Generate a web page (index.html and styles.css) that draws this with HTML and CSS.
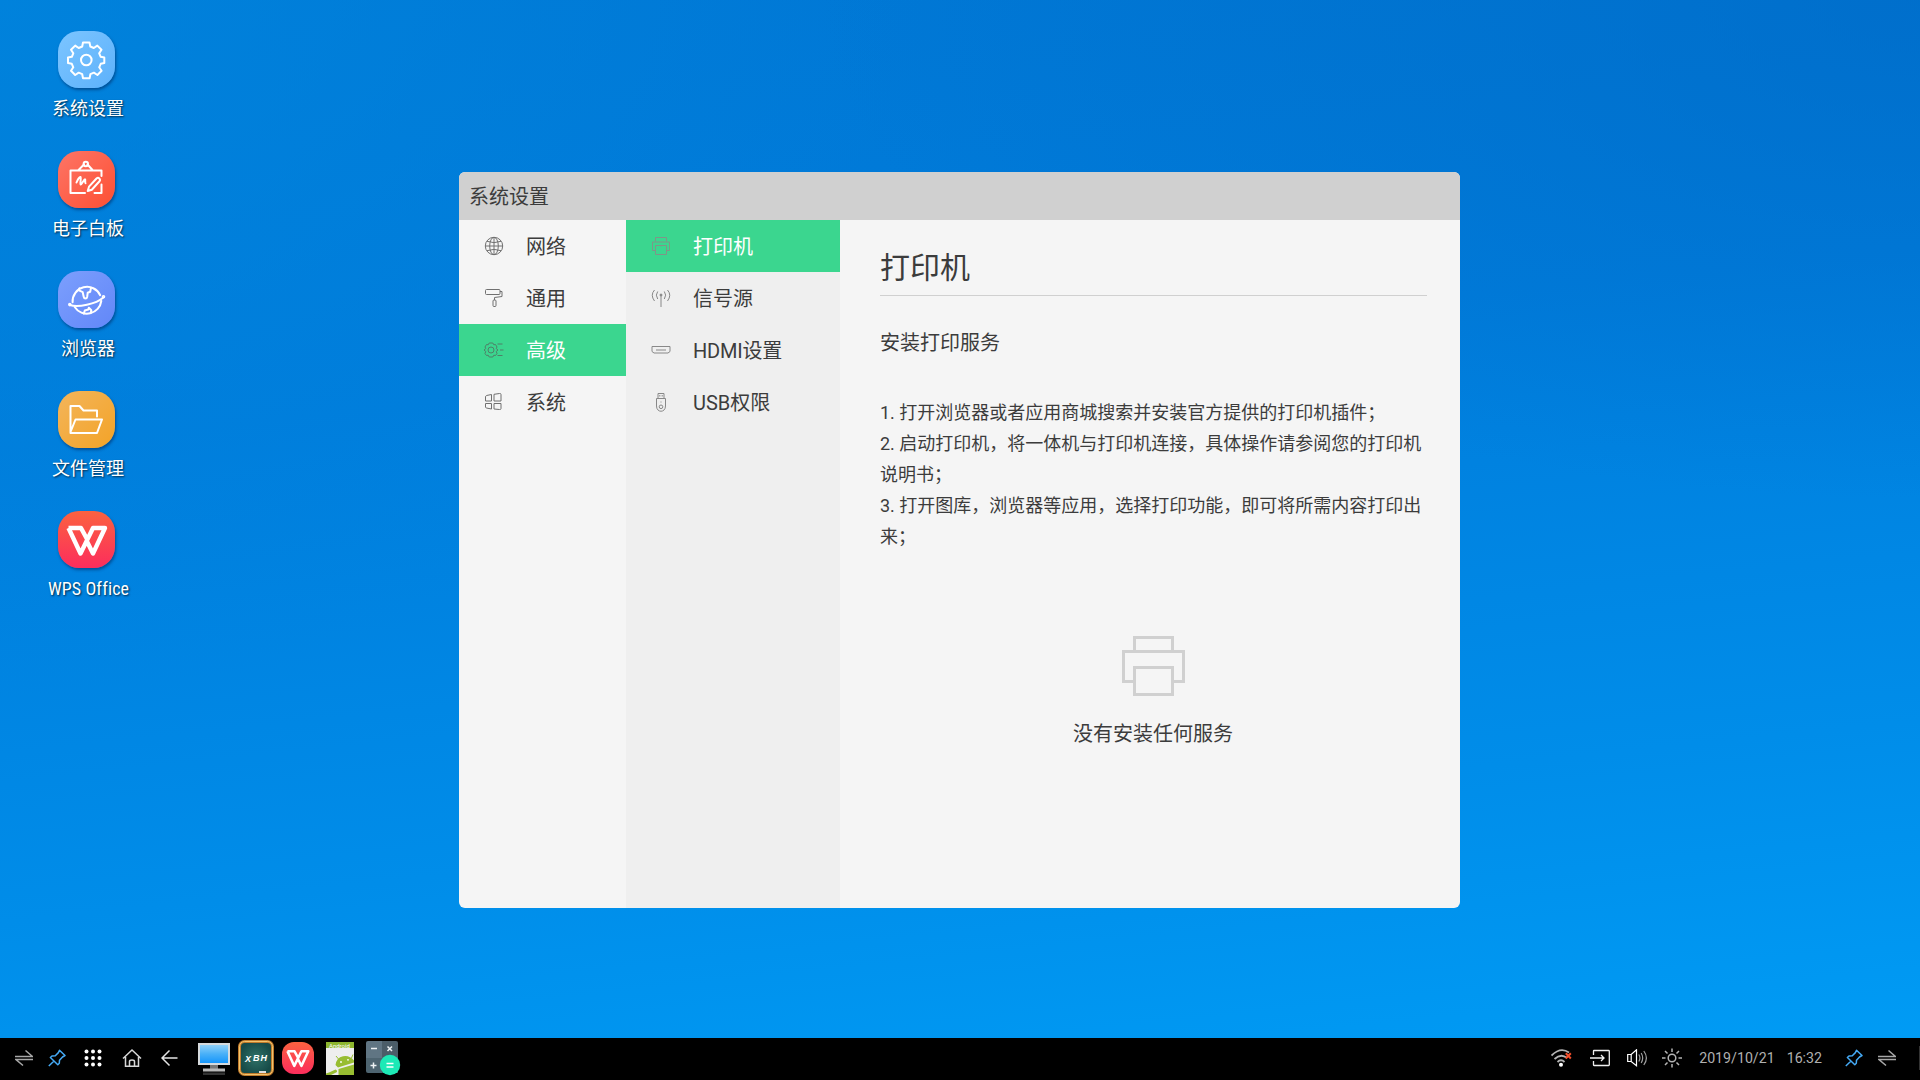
FILE: index.html
```html
<!DOCTYPE html>
<html lang="zh-CN">
<head>
<meta charset="utf-8">
<title>系统设置</title>
<link rel="stylesheet" href="styles.css">
</head>
<body>
<svg width="0" height="0" aria-hidden="true">
  <defs>
    <linearGradient id="wps-red" x1="0" y1="0" x2="0" y2="1"><stop offset="0" stop-color="#fb6240"/><stop offset="1" stop-color="#fc2d5c"/></linearGradient>
    <linearGradient id="screen" x1="0" y1="0" x2="0" y2="1"><stop offset="0" stop-color="#8fd0f8"/><stop offset=".5" stop-color="#48b0f8"/><stop offset="1" stop-color="#1696fb"/></linearGradient>
    <radialGradient id="board"><stop offset="0" stop-color="#2f7268"/><stop offset="1" stop-color="#174b48"/></radialGradient>
    <symbol id="swap" viewBox="0 0 18 18"><path d="M0 7.500H17.500L10.500 1.500M18 10.500H1L8 16.500" fill="none" stroke="#a8a8a8" stroke-width="1.500"/></symbol>
    <symbol id="pin" viewBox="0 0 18 18"><path d="M11.500 1.200 17 6.500 14.500 8 11.500 11.300 11.300 14.300 9.800 15.700 2.400 8.500 4 7 7.300 6.700 10.400 3.600ZM6 12 .8 17" fill="none" stroke="#45aaf5" stroke-width="1.500" stroke-linejoin="round"/></symbol>
    <symbol id="wps-mark" viewBox="0 0 42 32"><path d="M2.500 3H15L21 14M2.500 3 14.500 28.500 27 3H39L27 28.500 21 16.500" fill="none" stroke="#fff" stroke-width="4.400" stroke-linejoin="round"/></symbol>
  </defs>
</svg>
<div class="screen">
  <main class="desktop">
    <nav class="launchers">
      <a class="launcher"><span class="tile tile-settings"><svg width="57" height="57" viewBox="0 0 57 57"><g fill="none" stroke="#fff" stroke-width="2" stroke-linejoin="round"><circle cx="28.300" cy="29" r="5.300"/><path d="M25 11.500h6.500l.8 4 3.500 1.500 3.500-2.400 4.200 4.200-2.300 3.500 1.500 3.500 3.600.7v5.500l-3.600.8-1.500 3.500 2.400 3.500-4.200 4.200-3.500-2.300-3.500 1.500-.8 4H25l-.8-4-3.500-1.500-3.500 2.300-4.200-4.200 2.300-3.500-1.500-3.500-3.800-.8v-5.500l3.800-.7 1.500-3.500-2.300-3.500 4.200-4.200 3.500 2.400 3.500-1.500z"/></g></svg></span><span class="name">系统设置</span></a>
      <a class="launcher"><span class="tile tile-board"><svg width="57" height="57" viewBox="0 0 57 57"><g fill="none" stroke="#fff" stroke-width="2" stroke-linejoin="round" stroke-linecap="round"><path d="M43.500 25V19.500H12.500V42H27M36.500 42H43.500V33.500M20.500 19 26 13.500M34.500 19 29.500 13.500"/><circle cx="27.800" cy="13" r="2.200"/><path d="M18.500 31.500c1-2.500 3-6 4-5.500s-.8 7 .2 7.500 3.300-5.500 4.300-5.300-.5 3.500.5 4"/><path d="M29.700 40 31 35.700 38.500 27.500c2-1.700 4.500.5 3 2.800L33.800 38.700Z"/></g></svg></span><span class="name">电子白板</span></a>
      <a class="launcher"><span class="tile tile-browser"><svg width="57" height="57" viewBox="0 0 57 57"><g fill="none" stroke="#fff" stroke-width="2" stroke-linecap="round" stroke-linejoin="round"><path d="M14.600 31.200A14.500 14.500 0 0 1 42.200 24.200M43.300 30A14.500 14.500 0 0 1 16.700 36"/><path d="M12 34c8 2.500 26-1 33-7.300"/><circle cx="11.800" cy="33.600" r=".8"/><circle cx="45.500" cy="25.800" r=".8"/><path d="M21.500 17.200l-1 2 4.200 2 1 4.500c.5 2.500 3 2.500 3.500 0l.5-4 2.500-1 .8-4M25.800 42.500l1-3 3.500-1 .5-1.700 2.500 2.500-.5 2.700"/></g></svg></span><span class="name">浏览器</span></a>
      <a class="launcher"><span class="tile tile-files"><svg width="57" height="57" viewBox="0 0 57 57"><path d="M39 25.500V19.500H25.500L21.500 15H12.500V42H39L44 28.500H17.500L12.500 41" fill="none" stroke="#fff" stroke-width="2" stroke-linejoin="round" stroke-linecap="round"/></svg></span><span class="name">文件管理</span></a>
      <a class="launcher"><span class="tile tile-wps"><svg width="42" height="32"><use href="#wps-mark"/></svg></span><span class="name name-latin">WPS Office</span></a>
    </nav>
    <section class="window">
      <header class="titlebar">系统设置</header>
      <div class="panes">
        <ul class="menu menu-main">
          <li class="item"><svg class="icon" width="20" height="20" viewBox="0 0 20 20"><g><circle cx="10" cy="10" r="8.700"/><ellipse cx="10" cy="10" rx="4.300" ry="8.700"/><path d="M1.300 10H18.700M10 1.300V18.700M3 5.300Q10 8 17 5.300M3 14.700Q10 12 17 14.700"/></g></svg><span>网络</span></li>
          <li class="item"><svg class="icon" width="20" height="20" viewBox="0 0 20 20"><g><rect x="1.500" y="1.500" width="14.500" height="5" rx="1"/><path d="M16 3.500H18V8.500L10.500 9.500V12"/><rect x="9" y="12" width="3" height="6.500" rx="1"/></g></svg><span>通用</span></li>
          <li class="item active"><svg class="icon" width="20" height="20" viewBox="0 0 20 20"><g><circle cx="7" cy="10" r="3"/><path d="M13.500 4H18.500M16 10H19.500M13.500 15.500H18.500M11.500 4.500 9.800 4.800 8.800 3H5.200L4.200 4.800 2.500 4.500 1 7 1.800 8.500 0 10 1.800 11.500 1 13.500 2.500 15.500 4.200 15.200 5.200 17H8.800L9.800 15.200 11.500 15.500 13 13.500 12.200 11.500 14 10 12.200 8.500 13 7Z"/></g></svg><span>高级</span></li>
          <li class="item"><svg class="icon" width="20" height="20" viewBox="0 0 20 20"><g><path d="M1.500 5Q1.500 4 2.500 3.500L7.500 2.500V9H1.500ZM10 2.300 15.500 1.500Q17 1.300 17 2.500V9H10ZM1.500 11.500H7.500V17L2.500 16Q1.500 15.800 1.500 15ZM10 11.500H17V16.500Q17 17.700 15.500 17.500L10 17Z"/></g></svg><span>系统</span></li>
        </ul>
        <ul class="menu menu-sub">
          <li class="item active printing"><svg class="icon" width="20" height="20" viewBox="0 0 20 20"><g><path d="M4.500 5.500V1.500H15.500V5.500M4.500 14.500H1.500V6H18.500V14.500H15.500M9.500 10H10.500"/><rect x="4.500" y="9.500" width="11" height="9"/></g></svg><span>打印机</span></li>
          <li class="item"><svg class="icon" width="20" height="20" viewBox="0 0 20 20"><g><path d="M10 7V19M6.700 3.500Q4 7 6.700 11M13.300 3.500Q16 7 13.300 11M3.500 2Q-1 7 3.500 13M16.500 2Q21 7 16.500 13"/><circle cx="10" cy="7" r="1" fill="#888"/></g></svg><span>信号源</span></li>
          <li class="item"><svg class="icon" width="20" height="20" viewBox="0 0 20 20"><g><path d="M1 6.500H19V11.500L17 13H3L1 11.500ZM5 10H15"/></g></svg><span class="tight">HDMI设置</span></li>
          <li class="item"><svg class="icon" width="20" height="20" viewBox="0 0 20 20"><g><path d="M7 6V1.500H13V6M8.800 3V4.500M11.200 3V4.500M5.500 6.500H14.500V14C14.500 21 5.500 21 5.500 14ZM9.500 10H10.500"/><circle cx="10" cy="14.800" r="1.800"/></g></svg><span>USB权限</span></li>
        </ul>
        <article class="detail">
          <h1>打印机</h1>
          <h2>安装打印服务</h2>
          <ol class="steps">
            <li>1. 打开浏览器或者应用商城搜索并安装官方提供的打印机插件；</li>
            <li>2. 启动打印机，将一体机与打印机连接，具体操作请参阅您的打印机<br>说明书；</li>
            <li>3. 打开图库，浏览器等应用，选择打印功能，即可将所需内容打印出<br>来；</li>
          </ol>
          <div class="empty">
            <svg width="63" height="60" viewBox="0 0 63 60"><path d="M12.500 15V1.500H50.500V15M12.500 45.500H1.500V15.500H61.500V45.500H50.500M12.500 31.500H50.500V58.500H12.500Z" fill="none" stroke="#d0d0d0" stroke-width="3"/></svg>
            <p>没有安装任何服务</p>
          </div>
        </article>
      </div>
    </section>
  </main>
  <footer class="taskbar">
    <div class="keys">
      <svg width="18" height="18"><use href="#swap"/></svg>
      <svg width="18" height="18"><use href="#pin"/></svg>
      <svg width="18" height="18" viewBox="0 0 18 18"><g fill="#fff"><circle cx="2.500" cy="2.500" r="2"/><circle cx="9" cy="2.500" r="2"/><circle cx="15.500" cy="2.500" r="2"/><circle cx="2.500" cy="9" r="2"/><circle cx="9" cy="9" r="2"/><circle cx="15.500" cy="9" r="2"/><circle cx="2.500" cy="15.500" r="2"/><circle cx="9" cy="15.500" r="2"/><circle cx="15.500" cy="15.500" r="2"/></g></svg>
      <svg width="20" height="20" viewBox="0 0 20 20"><path d="M1 10.500 10 2 19 10.500M3.500 9V18.300H16.500V9M7.500 18V13.500Q7.500 12 10 12T12.500 13.500V18" fill="none" stroke="#d8d8d8" stroke-width="1.500"/></svg>
      <svg width="17" height="18" viewBox="0 0 17 18"><path d="M16.500 9H1.500M8.500 1.500 1 9 8.500 16.500" fill="none" stroke="#e4e4e4" stroke-width="1.500"/></svg>
    </div>
    <div class="apps">
      <svg width="32" height="36" viewBox="0 0 32 36"><rect x="0" y="3" width="32" height="22" fill="#d5dadd"/><rect x="2" y="5" width="28" height="18" fill="url(#screen)"/><path d="M12 25H20V29H12Z" fill="#777"/><path d="M5 28.500H27V31.500H5Z" fill="#b8b8b8"/><path d="M5 32.500H27V35H5Z" fill="#333"/></svg>
      <svg width="36" height="36" viewBox="0 0 36 36"><rect x="1.500" y="1.500" width="33" height="33" rx="5" fill="url(#board)" stroke="#c07a2c" stroke-width="3"/><rect x="1.500" y="1.500" width="33" height="33" rx="5" fill="none" stroke="#f2c46c" stroke-width="1"/><path d="M21 32H28" stroke="#ddd" stroke-width="2"/><g class="chalk"><text x="7" y="21.500">X</text><text x="15" y="21">B</text><text x="22.500" y="21">H</text></g></svg>
      <svg width="34" height="34" viewBox="0 0 34 34"><rect x="1" y="1" width="32" height="32" rx="12" fill="url(#wps-red)"/><svg x="5" y="8.500" width="24" height="18.500"><use href="#wps-mark"/></svg></svg>
      <svg width="29" height="34" viewBox="0 0 29 34"><path d="M0 1H28V34H0Z" fill="#eee"/><path d="M0 1H28V7H0Z" fill="#8db62f"/><text x="3" y="7" class="apk">Android</text><g fill="#98bd31"><path d="M9.500 24Q10.500 16.500 17 15.200T28 19.500V21.500L12 26.500ZM12.500 28 28 23.500V34H12.500ZM0 32.500 3 31.500 9.500 28.500Q11.500 29 11 31L5 34H0Z"/><path d="M12.500 18 10 15M25.500 17 27 13.500" stroke="#98bd31"/></g><circle cx="15" cy="21" r=".9" fill="#fff"/><circle cx="22" cy="18.800" r=".9" fill="#fff"/></svg>
      <svg width="36" height="36" viewBox="0 0 36 36"><path d="M2 1H16V18H0V3Q0 1 2 1Z" fill="#607583"/><path d="M16 1H30Q32 1 32 3V18H16Z" fill="#4b5d68"/><path d="M0 18H16V33H2Q0 33 0 31Z" fill="#4e6470"/><path d="M16 18H32V33H16Z" fill="#3e4f59"/><path d="M5 8.500H11M21.500 6.500 26 11M26 6.500 21.500 11M4.500 25.500H10.500M7.500 22.500V28.500" stroke="#eef2f4" stroke-width="1.500"/><circle cx="24" cy="25" r="10.200" fill="#1de9b6"/><path d="M20.500 23.500H27.500M20.500 27H27.500" stroke="#fff" stroke-width="1.500"/></svg>
    </div>
    <div class="tray">
      <svg width="22" height="18" viewBox="0 0 22 18"><g fill="none" stroke="#b4b4b4" stroke-width="1.800"><path d="M.5 6.500Q9.500-2.500 18 3.500M3.500 10Q10 4 16 9M6.500 13Q10 9.500 13.500 13"/></g><circle cx="10" cy="15.800" r="2" fill="#fff"/><path d="M14.800 4.200 19.800 9.500M19.800 4.200 14.800 9.500" stroke="#f34e2b" stroke-width="2"/></svg>
      <svg width="20" height="18" viewBox="0 0 20 18"><path d="M3.500 6V2Q3.500 1.500 4 1.500H18.500Q19.300 1.500 19.300 2.300V15.700Q19.300 16.500 18.500 16.500H4Q3.500 16.500 3.500 16V12M0 9H14M11 6 14 9 11 12" fill="none" stroke="#f0f0f0" stroke-width="1.300"/></svg>
      <svg width="21" height="18" viewBox="0 0 21 18"><path d="M.7 5.500H4.200L9.500.8V16.700L4.200 12.500H.7ZM4.200 5.500V12.500" fill="none" stroke="#fff" stroke-width="1.200"/><path d="M11.800 5.500Q14 9 11.800 12.500M14.200 4Q17.200 9 14.200 14M16.800 2Q22 9 16.800 16" fill="none" stroke="#a0a0a0" stroke-width="1.200"/></svg>
      <svg class="sun" width="20" height="20" viewBox="0 0 20 20"><g fill="none" stroke="#b4b4b4" stroke-width="1.500"><circle cx="10" cy="10" r="3.800"/><path d="M10 .5V4M10 16V19.500M0 10H3.500M16.500 10H20M3 3 5.500 5.500M14.500 14.500 17 17M17 3 14.500 5.500M5.500 14.500 3 17"/></g></svg>
      <span class="date">2019/10/21</span>
      <span class="time">16:32</span>
      <svg width="18" height="18"><use href="#pin"/></svg>
      <svg width="18" height="18"><use href="#swap"/></svg>
      <span class="edge"></span>
    </div>
  </footer>
</div>
</body>
</html>
```
FILE: styles.css
```css
* { box-sizing: border-box; }
html, body { margin: 0; height: 100%; overflow: hidden; }
body { font-family: Roboto, "Noto Sans CJK SC", sans-serif; color: #3c3c3c; }
svg { display: block; flex: none; }
ul, ol { list-style: none; margin: 0; padding: 0; }
h1, h2, p { margin: 0; font-weight: 400; }

.screen {
  display: flex;
  flex-direction: column;
  width: 1920px;
  height: 1080px;
  background:
    radial-gradient(ellipse 900px 700px at 0 0, rgba(0, 136, 224, .65), rgba(0, 136, 224, 0)),
    radial-gradient(ellipse 1100px 500px at 100% 0, rgba(0, 104, 196, .6), rgba(0, 104, 196, 0)),
    linear-gradient(174deg, #0077d4 0%, #007cdb 35%, #008de9 72%, #009df6 100%);
}
.desktop { flex: 1; display: flex; align-items: flex-start; }

.launchers { width: 176px; padding-top: 31px; display: flex; flex-direction: column; }
.launcher { height: 120px; display: flex; flex-direction: column; align-items: center; }
.tile {
  width: 57px;
  height: 57px;
  margin-right: 3px;
  border-radius: 21px;
  display: flex;
  align-items: center;
  justify-content: center;
  box-shadow: 1px 2px 3px rgba(0, 30, 80, .5);
}
.tile-settings { background: linear-gradient(135deg, #7cc5ff, #5db1fb); }
.tile-board { background: linear-gradient(135deg, #fd7566, #fd4f33); }
.tile-browser { background: linear-gradient(135deg, #7c9ffd, #6287f8); }
.tile-files { background: linear-gradient(135deg, #f3b55b, #f3a327); }
.tile-wps { padding-top: 2px; background: linear-gradient(#fb6240, #fc2d5c); }
.name {
  margin-top: 8px;
  font-size: 18px;
  line-height: 26px;
  color: #fff;
  white-space: nowrap;
  text-shadow: 1px 1px 2px rgba(0, 0, 0, .7);
}
.name-latin { padding-left: 1px; font-family: "Roboto Condensed", Roboto, sans-serif; font-stretch: 75%; letter-spacing: .1px; }

.window {
  width: 1001px;
  height: 736px;
  margin: 172px 0 0 283px;
  display: flex;
  flex-direction: column;
  border-radius: 6px;
  overflow: hidden;
  background: #f5f5f5;
}
.titlebar { height: 48px; padding: 1px 0 0 10px; line-height: 48px; font-size: 20px; background: #d0d0d0; }
.panes { flex: 1; display: flex; }
.menu-main { width: 167px; }
.menu-sub { width: 214px; background: #efefef; }
.item { height: 52px; padding: 0 0 2px 25px; display: flex; align-items: center; font-size: 20px; white-space: nowrap; }
.icon { margin: 1px 22px 0 0; }
.icon g { fill: none; stroke: #707070; stroke-width: 1; stroke-linejoin: round; }
.menu-sub .icon g { stroke: #888; }
.tight { letter-spacing: -.2px; }
.active { background: #3bd68f; color: #fff; }
.active .icon g { stroke: #4f8068; }
.menu-sub .printing .icon g { stroke: #7f9688; }

.detail { flex: 1; padding: 25px 33px 0 40px; }
.detail h1 { height: 51px; padding-top: 1px; border-bottom: 1px solid #d0d0d0; font-size: 30px; line-height: 44px; }
.detail h2 { margin-top: 32px; font-size: 20px; line-height: 30px; }
.steps { margin-top: 39px; font-size: 18px; line-height: 31px; white-space: nowrap; }
.empty { margin-top: 84px; display: flex; flex-direction: column; align-items: center; }
.empty p { margin-top: 24px; padding-right: 1px; font-size: 20px; line-height: 28px; }

.taskbar { height: 42px; padding-bottom: 2px; background: #000; display: flex; align-items: center; color: #b0b0b0; }
.keys { display: flex; align-items: center; gap: 16px; padding-left: 15px; width: 198px; }
.keys svg:nth-child(2) { margin-left: -1px; }
.keys svg:nth-child(3) { margin-left: 2px; }
.keys svg:nth-child(4) { margin-left: 4px; }
.keys svg:nth-child(5) { margin-left: 3px; }
.apps { display: flex; align-items: center; gap: 8px; }
.apps svg:nth-child(3) { margin-left: -1px; }
.apps svg:nth-child(4), .apps svg:nth-child(5) { margin-left: 3px; }
.chalk { font: italic 700 9px "Liberation Sans", sans-serif; fill: #fff; }
.apk { font: 6px Roboto, sans-serif; fill: #fff; }
.tray { margin-left: auto; display: flex; align-items: center; gap: 17px; font-size: 14px; }
.sun { margin-left: -3px; }
.date, .time { font-size: 14.2px; }
.time { margin-left: -5px; }
.tray .time + svg { margin-left: 6px; }
.tray svg:last-of-type { margin-left: -2px; }
.edge { width: 1px; height: 24px; margin-left: 6px; background: #333; }
```
